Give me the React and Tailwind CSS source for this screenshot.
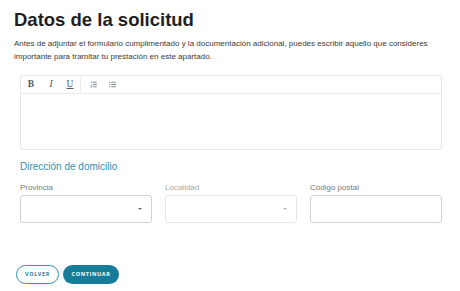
import React from 'react';

function OrderedIcon() {
  return (
    <svg width="7" height="7" viewBox="0 0 14 14" fill="none">
      <path d="M1.5 1.5h1.5v3.5M1 9h2.2v1.2L1 12.5h2.5" stroke="#5b6670" strokeWidth="1.1" />
      <path d="M5.5 2.5h8M5.5 7h8M5.5 11.5h8" stroke="#5b6670" strokeWidth="1.6" />
    </svg>
  );
}

function BulletIcon() {
  return (
    <svg width="7" height="7" viewBox="0 0 14 14" fill="none">
      <circle cx="1.6" cy="2.5" r="1.2" fill="#5b6670" />
      <circle cx="1.6" cy="7" r="1.2" fill="#5b6670" />
      <circle cx="1.6" cy="11.5" r="1.2" fill="#5b6670" />
      <path d="M4.5 2.5h9M4.5 7h9M4.5 11.5h9" stroke="#5b6670" strokeWidth="1.6" />
    </svg>
  );
}

function Caret({ disabled }) {
  return (
    <div
      className={
        'w-0 h-0 border-l-[2.5px] border-r-[2.5px] border-t-[2.5px] border-l-transparent border-r-transparent ' +
        (disabled ? 'border-t-[#b8b8b8]' : 'border-t-[#666]')
      }
    />
  );
}

export default function App() {
  return (
    <div className="w-[460px] h-[291px] bg-white pt-[9px] font-['Liberation_Sans',Arial,sans-serif] overflow-hidden">
      <div className="pl-[14px]">
        <h1 className="text-[18.5px] leading-[22px] font-bold text-[#1f1f1f]">Datos de la solicitud</h1>
        <p className="mt-[6px] text-[8px] leading-[13px] text-[#3a3a3a] w-[420px]">
          Antes de adjuntar el formulario cumplimentado y la documentación adicional, puedes escribir aquello que consideres
          importante para tramitar tu prestación en este apartado.
        </p>
      </div>

      <div className="ml-[20px] w-[422px]">
        {/* editor */}
        <div className="mt-[12px] border border-[#e6e6e6] rounded-[2px]">
          <div className="h-[18px] border-b border-[#ececec] flex items-center pl-[6px]">
            <span className="w-[8px] text-center font-['Liberation_Serif',serif] font-bold text-[9.5px] text-[#4f5a64]">B</span>
            <span className="ml-[12px] w-[8px] text-center font-['Liberation_Serif',serif] italic text-[9.5px] text-[#4f5a64]">I</span>
            <span className="ml-[11px] w-[8px] text-center font-['Liberation_Serif',serif] underline text-[9.5px] text-[#4f5a64]">U</span>
            <div className="ml-[6px] w-px h-[14px] bg-[#ececec]" />
            <div className="ml-[9px] flex items-center"><OrderedIcon /></div>
            <div className="ml-[12px] flex items-center"><BulletIcon /></div>
          </div>
          <div className="h-[55px]" />
        </div>

        {/* domicilio */}
        <h2 className="mt-[11px] text-[10px] leading-[12px] text-[#3190b6]">Dirección de domicilio</h2>
        <div className="mt-[10px] grid grid-cols-3 gap-[13px]">
          <div>
            <div className="text-[8px] leading-[10px] text-[#777]">Provincia</div>
            <div className="mt-[2px] h-[28px] border border-[#d2d2d2] rounded-[3px] flex items-center justify-end pr-[9px]">
              <Caret />
            </div>
          </div>
          <div>
            <div className="text-[8px] leading-[10px] text-[#a8a8a8]">Localidad</div>
            <div className="mt-[2px] h-[28px] border border-[#e6e6e6] rounded-[3px] flex items-center justify-end pr-[9px]">
              <Caret disabled />
            </div>
          </div>
          <div>
            <div className="text-[8px] leading-[10px] text-[#777]">Código postal</div>
            <div className="mt-[2px] h-[28px] border border-[#d2d2d2] rounded-[3px]" />
          </div>
        </div>
      </div>

      <div className="mt-[42px] ml-[16px] flex gap-[4px]">
        <button className="w-[43px] h-[19px] rounded-full border-[1.5px] border-[#3393b5] text-[#2a7f9c] text-[5.5px] font-bold tracking-[0.6px] font-['Open_Sans',sans-serif] flex items-center justify-center">
          VOLVER
        </button>
        <button className="w-[56px] h-[19px] rounded-full bg-[#167c99] text-white text-[5.5px] font-bold tracking-[0.6px] font-['Open_Sans',sans-serif] flex items-center justify-center">
          CONTINUAR
        </button>
      </div>
    </div>
  );
}
